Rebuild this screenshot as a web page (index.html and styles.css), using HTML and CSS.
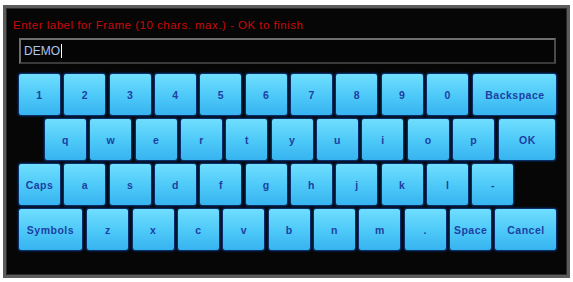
FILE: index.html
```html
<!DOCTYPE html>
<html>
<head>
<meta charset="utf-8">
<link rel="stylesheet" href="styles.css">
</head>
<body>
<div class="panel">
  <div class="title">Enter label for Frame (10 chars. max.) - OK to finish</div>
  <div class="input"><span class="val">DEMO</span><span class="caret"></span></div>
  <div class="keys">
    <div class="row">
      <div class="key">1</div><div class="key">2</div><div class="key">3</div><div class="key">4</div><div class="key">5</div>
      <div class="key">6</div><div class="key">7</div><div class="key">8</div><div class="key">9</div><div class="key">0</div>
      <div class="key backspace">Backspace</div>
    </div>
    <div class="row row2">
      <div class="key">q</div><div class="key">w</div><div class="key">e</div><div class="key">r</div><div class="key">t</div>
      <div class="key">y</div><div class="key">u</div><div class="key">i</div><div class="key">o</div><div class="key">p</div>
      <div class="key ok">OK</div>
    </div>
    <div class="row">
      <div class="key">Caps</div><div class="key">a</div><div class="key">s</div><div class="key">d</div><div class="key">f</div>
      <div class="key">g</div><div class="key">h</div><div class="key">j</div><div class="key">k</div><div class="key">l</div>
      <div class="key">-</div>
    </div>
    <div class="row">
      <div class="key symbols">Symbols</div><div class="key">z</div><div class="key">x</div><div class="key">c</div><div class="key">v</div>
      <div class="key">b</div><div class="key">n</div><div class="key">m</div><div class="key">.</div><div class="key">Space</div>
      <div class="key cancel">Cancel</div>
    </div>
  </div>
</div>
</body>
</html>
```
FILE: styles.css
```css
html, body { margin: 0; padding: 0; background: #ffffff; }
body { font-family: "Liberation Sans", Arial, sans-serif; }
.panel {
  margin: 5px 0 0 3px;
  width: 567px;
  height: 273px;
  box-sizing: border-box;
  border: 3px solid #5c5c5c;
  box-shadow: inset 0 0 0 1px #2a2a2a;
  background: #060606;
  padding: 10px 0 0 7px;
}
.title {
  color: #c80a0a;
  font-size: 11.5px;
  letter-spacing: 0.5px;
  line-height: 14px;
  height: 14px;
  white-space: nowrap;
}
.input {
  margin: 6px 0 0 6px;
  width: 537px;
  height: 26px;
  box-sizing: border-box;
  border: 2px solid #6e6e6e;
  border-right-color: #4a4a4a;
  border-bottom-color: #3a3a3a;
  background: #050505;
  display: flex;
  align-items: center;
  padding-left: 3px;
}
.val { color: #acc6ee; font-size: 12px; }
.caret { width: 1px; height: 14px; background: #ffffff; margin-left: 1px; }
.keys {
  margin: 10px 0 0 6px;
  display: flex;
  flex-direction: column;
  gap: 4px;
}
.row { display: flex; gap: 4.35px; }
.row2 { margin-left: 26px; }
.key {
  width: 41px;
  height: 41px;
  box-sizing: border-box;
  border-radius: 2px;
  background: linear-gradient(#70defe, #4cc8f8 55%, #37b3f0);
  box-shadow: 0 0 2px 1px #0b3d8f;
  color: #1d3fa2;
  font-size: 10.5px;
  letter-spacing: 0.5px;
  font-weight: bold;
  display: flex;
  align-items: center;
  justify-content: center;
  flex: none;
}
.backspace { width: 83px; margin-left: 1px; }
.ok { width: 56px; margin-left: 1px; }
.symbols { width: 63px; margin-right: 1px; }
.cancel { width: 61px; }
```
